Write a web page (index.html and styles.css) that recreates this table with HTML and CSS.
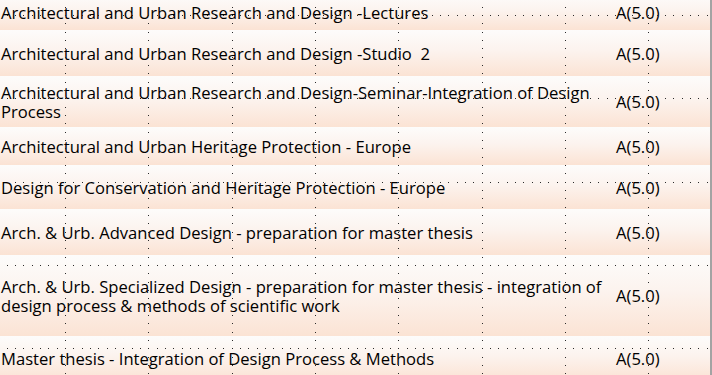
FILE: index.html
```html
<!DOCTYPE html>
<html lang="en">
<head>
<meta charset="utf-8">
<title>Courses</title>
<link rel="stylesheet" href="styles.css">
</head>
<body>
<div class="sheet">
  <div class="row h35"><div class="course">Architectural and Urban Research and Design -Lectures</div><div class="grade">A(5.0)</div></div>
  <div class="row h46"><div class="course">Architectural and Urban Research and Design -Studio&nbsp; 2</div><div class="grade">A(5.0)</div></div>
  <div class="row h51"><div class="course">Architectural and Urban Research and Design-Seminar-Integration of Design<br>Process</div><div class="grade">A(5.0)</div></div>
  <div class="row h38"><div class="course">Architectural and Urban Heritage Protection - Europe</div><div class="grade">A(5.0)</div></div>
  <div class="row h44"><div class="course">Design for Conservation and Heritage Protection - Europe</div><div class="grade">A(5.0)</div></div>
  <div class="row h46"><div class="course">Arch. &amp; Urb. Advanced Design - preparation for master thesis</div><div class="grade">A(5.0)</div></div>
  <div class="row h81"><div class="course">Arch. &amp; Urb. Specialized Design - preparation for master thesis - integration of<br>design process &amp; methods of scientific work</div><div class="grade">A(5.0)</div></div>
  <div class="row h44"><div class="course">Master thesis - Integration of Design Process &amp; Methods</div><div class="grade">A(5.0)</div></div>
</div>
<svg class="grid" width="712" height="375" viewBox="0 0 712 375" aria-hidden="true">
  <defs>
    <pattern id="dots" width="250" height="250" patternUnits="userSpaceOnUse" patternTransform="translate(65 15)">
      <path d="M0 0.5H250M0 83.5H250M0 167.5H250" stroke="#2a2a2a" stroke-width="1" stroke-dasharray="1 7 1 8 1 7" fill="none"/>
      <path d="M0.5 0V250M83.5 0V250M167.5 0V250" stroke="#2a2a2a" stroke-width="1" stroke-dasharray="1 7 1 8 1 7" fill="none"/>
    </pattern>
  </defs>
  <rect x="0" y="0" width="710" height="375" fill="url(#dots)" shape-rendering="crispEdges"/>
</svg>
</body>
</html>
```
FILE: styles.css
```css
html, body {
  margin: 0;
  padding: 0;
  background: #ffffff;
}
body {
  position: relative;
  width: 712px;
  height: 375px;
  overflow: hidden;
  font-family: "Open Sans", "Noto Sans", sans-serif;
  font-size: 16.6px;
  color: #000000;
}
.sheet {
  margin-top: -5px;
  width: 710px;
  border-right: 2px solid #a3a3a3;
  display: flex;
  flex-direction: column;
}
.row {
  display: grid;
  grid-template-columns: 612px 1fr;
  align-items: center;
  background: linear-gradient(to bottom, #fdfcfb 0%, #fcf3ee 45%, #fbe3d4 100%);
  line-height: 19px;
}
.course {
  padding-left: 1px;
  white-space: nowrap;
}
.grade {
  padding-left: 4px;
}
.h35 { height: 35px; }
.h38 { height: 38px; }
.h44 { height: 44px; }
.h46 { height: 46px; }
.h51 { height: 51px; }
.h81 { height: 81px; }
.grid {
  position: absolute;
  top: 0;
  left: 0;
  pointer-events: none;
}
```
